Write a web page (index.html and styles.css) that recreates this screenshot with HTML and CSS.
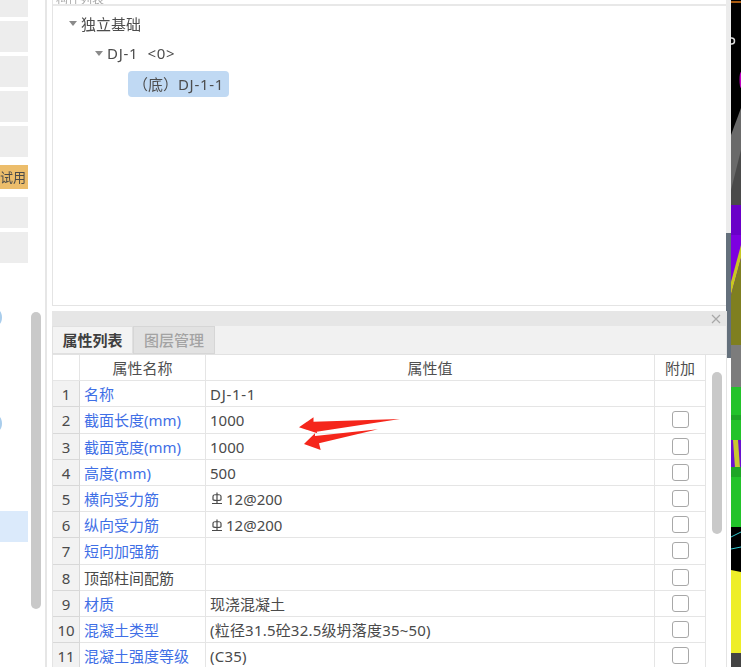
FILE: index.html
```html
<!DOCTYPE html>
<html lang="zh">
<head>
<meta charset="utf-8">
<title>属性列表</title>
<link rel="stylesheet" href="styles.css">
</head>
<body>
<svg class="defs" width="0" height="0" aria-hidden="true">
  <symbol id="rebar" viewBox="0 0 12 13">
    <path d="M6 0.5V11.5M1 11.5H11M2 7.5V4.5C2 3 3.5 2.5 6 2.5S10 3 10 4.5V7.5C10 8 9 8.5 6 8.5S2 8 2 7.5Z" fill="none" stroke="#4a4a4a" stroke-width="1.2"/>
  </symbol>
</svg>
<div class="app">
  <aside class="rail">
    <div class="tiles">
      <div class="tile t0"></div>
      <div class="tile"></div>
      <div class="tile"></div>
      <div class="tile"></div>
      <div class="tile"></div>
      <div class="tile trial"><span>试用</span></div>
      <div class="tile"></div>
      <div class="tile"></div>
    </div>
    <div class="dot d1"></div>
    <div class="dot d2"></div>
    <div class="tile selected"></div>
    <div class="rail-thumb"></div>
  </aside>
  <main class="panel">
    <section class="tree-wrap">
      <div class="tree-title"><span>构件列表</span></div>
      <div class="tree">
        <div class="node n1"><i class="caret"></i>独立基础</div>
        <div class="node n2"><i class="caret"></i><span class="code">DJ-1&nbsp;&nbsp;&lt;0&gt;</span></div>
        <div class="node n3"><span class="chip">（底）<span class="code">DJ-1-1</span></span></div>
      </div>
    </section>
    <section class="props">
      <div class="props-head">
        <svg class="close" width="10" height="10" viewBox="0 0 10 10"><path d="M1 1l8 8M9 1l-8 8" stroke="#a8a8a8" stroke-width="1.2" fill="none"/></svg>
      </div>
      <div class="tabs">
        <div class="tab active">属性列表</div>
        <div class="tab">图层管理</div>
      </div>
      <div class="table-area">
        <div class="grid">
          <div class="c h"></div><div class="c h center">属性名称</div><div class="c h center">属性值</div><div class="c h center">附加</div>

          <div class="c num">1</div><div class="c link">名称</div><div class="c code">DJ-1-1</div><div class="c"></div>
          <div class="c num">2</div><div class="c link">截面长度(mm)</div><div class="c">1000</div><div class="c center"><i class="check"></i></div>
          <div class="c num">3</div><div class="c link">截面宽度(mm)</div><div class="c">1000</div><div class="c center"><i class="check"></i></div>
          <div class="c num">4</div><div class="c link">高度(mm)</div><div class="c">500</div><div class="c center"><i class="check"></i></div>
          <div class="c num">5</div><div class="c link">横向受力筋</div><div class="c"><svg class="rebar"><use href="#rebar"/></svg>12@200</div><div class="c center"><i class="check"></i></div>
          <div class="c num">6</div><div class="c link">纵向受力筋</div><div class="c"><svg class="rebar"><use href="#rebar"/></svg>12@200</div><div class="c center"><i class="check"></i></div>
          <div class="c num">7</div><div class="c link">短向加强筋</div><div class="c"></div><div class="c center"><i class="check"></i></div>
          <div class="c num">8</div><div class="c">顶部柱间配筋</div><div class="c"></div><div class="c center"><i class="check"></i></div>
          <div class="c num">9</div><div class="c link">材质</div><div class="c">现浇混凝土</div><div class="c center"><i class="check"></i></div>
          <div class="c num">10</div><div class="c link">混凝土类型</div><div class="c wide">(粒径31.5砼32.5级坍落度35~50)</div><div class="c center"><i class="check"></i></div>
          <div class="c num">11</div><div class="c link">混凝土强度等级</div><div class="c wide">(C35)</div><div class="c center"><i class="check"></i></div>
        </div>
        <div class="vscroll"><div class="vthumb"></div></div>
      </div>
      <svg class="arrows" width="110" height="45" viewBox="0 0 110 45">
        <path d="M101 2 L14.5 4.7 L14.5 0.3 L0 10.3 L18.3 16.3 L17.7 14.7 Z" fill="#f5261b"/>
        <path d="M79 12.3 L16 19 L16 16.3 L5 27 L21.7 33 L20 26.3 Z" fill="#f5261b"/>
      </svg>
    </section>
  </main>
  <div class="splitter"><div class="split-top"></div><div class="split-low"></div></div>
  <svg class="canvas" width="10" height="667" viewBox="0 0 10 667">
    <rect width="10" height="667" fill="#000"/>
    <rect y="1" width="10" height="2" fill="#a85a10"/>
    <circle cx="0.5" cy="41" r="3" fill="none" stroke="#ddd" stroke-width="1.5"/>
    <ellipse cx="10" cy="80" rx="1.5" ry="8" fill="#c000c0"/>
    <polygon points="0,135 10,108 10,205 0,205" fill="#6a6a6a"/>
    <polygon points="0,190 10,150 10,205 0,205" fill="#4a4a4a"/>
    <rect y="205" width="10" height="30" fill="#6a00c8"/>
    <rect y="235" width="10" height="60" fill="#7d00e0"/>
    <polygon points="0,282 10,245 10,258 0,295" fill="#c8c820"/>
    <polygon points="0,295 10,258 10,345 0,345" fill="#7f7f20"/>
    <rect y="345" width="10" height="43" fill="#7c7c7c"/>
    <rect y="387" width="10" height="53" fill="#22c32a"/>
    <rect y="415" width="10" height="5" fill="#1ea626"/>
    <rect y="440" width="10" height="28" fill="#6a10d0"/>
    <polygon points="2,440 7,440 9,468 4,468" fill="#c8c830"/>
    <rect y="467" width="10" height="60" fill="#22c32a"/>
    <rect y="467" width="10" height="10" fill="#1ea626"/>
    <path d="M0 537 L10 532 M0 549 L10 547" stroke="#30c8d0" stroke-width="1"/>
    <polygon points="0,570 10,572 10,653 0,653" fill="#eeee28"/>
    <rect y="653" width="10" height="14" fill="#444"/>
  </svg>
</div>
</body>
</html>
```

FILE: styles.css
```css
* { box-sizing: border-box; }
html, body { margin: 0; height: 100%; background: #fff; overflow: hidden; }
body {
  font-family: "Noto Sans", "Noto Sans CJK SC", sans-serif;
  font-size: 15px;
  color: #444;
}
.defs { position: absolute; }
.app {
  display: flex;
  width: 741px;
  height: 667px;
  overflow: hidden;
  filter: blur(0.45px);
}

/* left rail */
.rail { position: relative; flex: none; width: 47px; border-right: 2px solid #e6e6e6; }
.tiles { display: flex; flex-direction: column; width: 28px; gap: 4px; margin-top: -14px; }
.tile { height: 31px; background: #ededed; width: 28px; }
.trial {
  height: 24px;
  margin: 4px 0;
  padding-right: 2px;
  background: #ecbd6b;
  color: #4a4a4a;
  font-size: 13px;
  line-height: 24px;
  text-align: right;
  white-space: nowrap;
  overflow: hidden;
}
.selected { position: absolute; left: 0; top: 511px; background: #dbeafb; }
.dot {
  position: absolute;
  left: -4px;
  width: 6px;
  height: 13px;
  border-radius: 50%;
  background: #a9cdec;
}
.d1 { top: 311px; }
.d2 { top: 417px; }
.rail-thumb {
  position: absolute;
  left: 31px;
  top: 312px;
  width: 10px;
  height: 297px;
  border-radius: 5px;
  background: #c9c9c9;
}

/* main panel */
.panel {
  width: 679px;
  flex: none;
  display: flex;
  flex-direction: column;
  padding-left: 5px;
}
.tree-wrap { height: 306px; width: 675px; flex: none; border: 1px solid #e4e4e4; border-top: 0; }
.tree-title {
  height: 6px;
  overflow: hidden;
  border-bottom: 2px solid #e8e8e8;
  font-size: 12px;
  color: #aaa;
  line-height: 0;
  padding-left: 3px;
}
.tree { padding-top: 2px; }
.node { display: flex; align-items: center; height: 30px; color: #4d4d4d; white-space: nowrap; }
.n1 { padding-left: 16px; }
.n2 { padding-left: 42px; }
.n3 { padding-left: 75px; }
.code { letter-spacing: 0.7px; }
.wide { letter-spacing: 0.2px; }
.caret {
  width: 0;
  height: 0;
  margin-right: 4px;
  border-left: 4px solid transparent;
  border-right: 4px solid transparent;
  border-top: 5px solid #8a8a8a;
}
.chip {
  display: block;
  width: 101px;
  height: 26px;
  margin-top: 2px;
  line-height: 26px;
  border-radius: 4px;
  background: #c0d9f3;
  text-align: center;
}

.props { position: relative; margin-top: 5px; flex: 1; min-height: 0; width: 675px; display: flex; flex-direction: column; border-right: 1px solid #e4e4e4; }
.props-head { height: 15px; background: #e6e6e6; flex: none; display: flex; justify-content: flex-end; align-items: center; padding-right: 5px; }
.close { display: block; }
.tabs { display: flex; height: 29px; background: #f1f1f1; flex: none; border-bottom: 1px solid #e2e2e2; }
.tab {
  width: 82px;
  line-height: 27px;
  text-align: center;
  font-weight: 500;
  color: #a3a3a3;
  background: #e2e2e2;
  border: 1px solid #d6d6d6;
}
.tab.active { width: 81px; background: #f3f3f3; color: #3f3f3f; font-weight: 700; border-color: #e0e0e0; }

.table-area { display: flex; flex: 1; min-height: 0; overflow: hidden; background: #fff; border-left: 1px solid #e4e4e4; }
.grid {
  display: grid;
  flex: none;
  grid-template-columns: 27px 126px 449px 51px;
  grid-auto-rows: 26.2px;
  width: 653px;
}
.c {
  border-right: 1px solid #e5e5e5;
  border-bottom: 1px solid #e5e5e5;
  padding-left: 4px;
  line-height: 26px;
  white-space: nowrap;
  overflow: hidden;
  color: #4a4a4a;
}
.center { padding-left: 0; text-align: center; }
.h { color: #4f4f4f; }
.num { padding: 0; text-align: center; background: #f2f2f2; border-right-color: #d8d8d8; border-bottom-color: #d8d8d8; }
.link { color: #3f6fe6; }
.rebar { width: 12px; height: 13px; margin: 0 3px 0 1px; position: relative; top: -2px; vertical-align: middle; }
.check {
  display: inline-block;
  width: 17px;
  height: 17px;
  margin-top: 4px;
  vertical-align: top;
  border: 1.5px solid #a8a8a8;
  border-radius: 3px;
  background: #fff;
}
.vscroll { position: relative; flex: 1; }
.vthumb {
  position: absolute;
  left: 6px;
  top: 17px;
  width: 10px;
  height: 162px;
  border-radius: 5px;
  background: #c9c9c9;
}
.arrows { position: absolute; left: 247px; top: 106px; }

/* splitter and canvas */
.splitter { width: 5px; flex: none; display: flex; flex-direction: column; }
.split-top { height: 233px; background: #ececec; }
.split-low { height: 125px; background: #64707c; }
.canvas { display: block; flex: none; }
```
